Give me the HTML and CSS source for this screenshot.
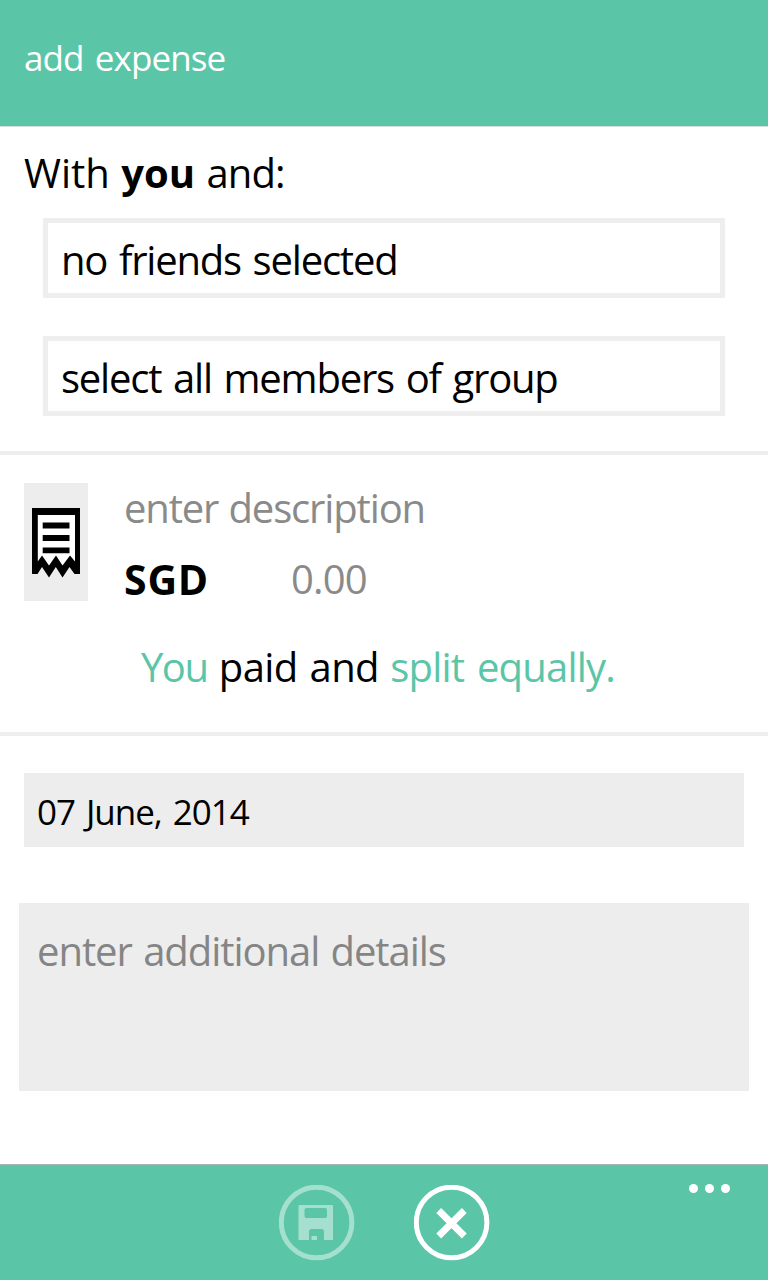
FILE: index.html
```html
<!DOCTYPE html>
<html lang="en">
<head>
<meta charset="utf-8">
<title>add expense</title>
<link rel="stylesheet" href="styles.css">
</head>
<body>
<div class="page">
  <header class="header"><h1 class="title">add expense</h1></header>
  <main class="content">
    <section class="people">
      <p class="with">With <b>you</b> <span class="and">and:</span></p>
      <div class="picker picker-friends"><span>no friends selected</span></div>
      <div class="picker picker-group"><span>select all members of group</span></div>
    </section>
    <section class="expense">
      <div class="entry">
        <div class="receipt">
          <svg width="64" height="118" viewBox="0 0 64 118">
            <path d="M8 25H56V91H50.500L45.500 84L38.500 94.500L31.800 84L25 94.500L18 84L13.500 91H8Z" fill="#000"/>
            <path d="M13.800 32H51V78.500L46 72.500L38.500 82.500L32 72.500L25 82.500L18 72.500L13.800 78.500Z" fill="#fff"/>
            <path d="M18.700 42.500H45.500M18.700 55H45.500M18.700 67.300H45.500" stroke="#000" stroke-width="5.800"/>
          </svg>
        </div>
        <div class="fields">
          <div class="description">enter description</div>
          <div class="amount"><b class="currency">SGD</b><span class="value">0.00</span></div>
        </div>
      </div>
      <p class="split"><a class="link you">You</a> <span class="paid">paid and</span> <a class="link equally">split equally.</a></p>
    </section>
    <section class="extra">
      <div class="date">07 June, 2014</div>
      <div class="details">enter additional details</div>
    </section>
  </main>
  <footer class="appbar">
    <svg class="round save" width="76" height="76" viewBox="0 0 76 76">
      <circle cx="37.600" cy="37.500" r="35.300" fill="none" stroke="#fff" stroke-width="5"/>
      <path fill="#fff" fill-rule="evenodd" d="M20.500 20H53Q54 20 54 21V55H45V46.500Q45 44 43 44H32Q30 44 30 46.500V55H19.500V21Q19.500 20 20.500 20ZM27.500 23Q25.500 23 25.500 25V31Q25.500 33 27.500 33H46Q48 33 48 31V25Q48 23 46 23ZM32.500 51H38V55H32.500Z"/>
    </svg>
    <svg class="round" width="76" height="76" viewBox="0 0 76 76">
      <circle cx="37.600" cy="37.500" r="35.300" fill="none" stroke="#fff" stroke-width="5"/>
      <path d="M24.700 25.500L50.300 51M50.300 25.500L24.700 51" stroke="#fff" stroke-width="6.800"/>
    </svg>
    <svg class="more" width="42" height="10" viewBox="0 0 42 10">
      <g fill="#fff"><circle cx="4.500" cy="4.500" r="4.500"/><circle cx="20.500" cy="4.500" r="4.500"/><circle cx="36.500" cy="4.500" r="4.500"/></g>
    </svg>
  </footer>
</div>
</body>
</html>
```
FILE: styles.css
```css
* { box-sizing: border-box; }
body { margin: 0; background: #fff; color: #000; font-family: "Open Sans", "Noto Sans", sans-serif; }
.page { width: 768px; height: 1280px; display: flex; flex-direction: column; overflow: hidden; font-size: 40px; line-height: 50px; white-space: nowrap; }
.header { height: 127px; padding: 33px 24px 0; background: #5bc5a7; border-bottom: 1px solid #d5dedb; color: #fff; }
.title { margin: 0; font-size: 35px; font-weight: 400; letter-spacing: -.9px; word-spacing: 3px; }
.content { flex: 1; }
p { margin: 0; }
.people { height: 328px; border-bottom: 4px solid #eee; padding: 21px 43px 0; }
.with { margin-left: -19px; height: 70px; word-spacing: 1px; }
.and { letter-spacing: -.9px; }
.picker { height: 80px; border: 5px solid #eee; padding: 12px 13px 0; letter-spacing: -1.2px; word-spacing: 2.500px; }
.picker-group { margin-top: 38px; }
.expense { height: 281px; border-bottom: 4px solid #eee; padding: 28px 24px 0; }
.entry { display: flex; gap: 36px; height: 119px; }
.receipt { width: 64px; height: 118px; background: #ededed; }
.receipt svg { display: block; }
.amount { display: flex; margin-top: 21px; }
.currency { width: 167px; font-size: 41px; letter-spacing: .8px; }
.description, .value { color: #8a8a8a; }
.description { letter-spacing: -1.15px; word-spacing: 1px; }
.value { letter-spacing: -.8px; }
.split { margin: 40px 0 0 117px; }
.link { color: #5bc5a7; }
.you { letter-spacing: -1.5px; }
.paid { letter-spacing: -.6px; word-spacing: 2px; margin-left: 1px; }
.equally { letter-spacing: -.8px; word-spacing: 3px; margin-left: 1px; }
.extra { padding: 37px 19px 0; }
.date { margin: 0 5px; height: 74px; padding: 14px 13px 0; background: #ededed; font-size: 35px; letter-spacing: -1.05px; word-spacing: 3px; }
.details { margin-top: 56px; height: 188px; padding: 23px 18px 0; background: #ededed; color: #858585; letter-spacing: -1.05px; word-spacing: 2px; }
.appbar { position: relative; height: 116px; flex: none; background: #5bc5a7; border-top: 1px solid #a9b8b3; display: flex; justify-content: center; gap: 59px; padding-top: 20px; }
.round { display: block; }
.save { opacity: .45; }
.more { position: absolute; right: 37px; top: 19px; }
```
